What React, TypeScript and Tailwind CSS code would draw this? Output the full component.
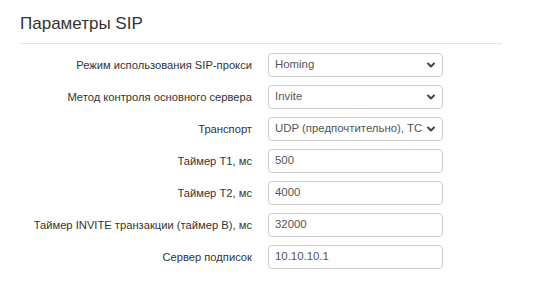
import { ChevronDown } from "lucide-react";

interface Row {
  label: string;
  value: string;
  select?: boolean;
}

const rows: Row[] = [
  { label: "Режим использования SIP-прокси", value: "Homing", select: true },
  { label: "Метод контроля основного сервера", value: "Invite", select: true },
  { label: "Транспорт", value: "UDP (предпочтительно), TC", select: true },
  { label: "Таймер T1, мс", value: "500" },
  { label: "Таймер T2, мс", value: "4000" },
  { label: "Таймер INVITE транзакции (таймер B), мс", value: "32000" },
  { label: "Сервер подписок", value: "10.10.10.1" },
];

function Field({ row }: { row: Row }) {
  return (
    <div className="flex items-center h-[32px]">
      <div className="w-[252px] text-right text-[11.2px] text-[#333]">
        {row.label}
      </div>
      <div className="ml-[16px] w-[175px] h-[24px] rounded-[4px] border border-[#ccc] bg-white flex items-center pl-[6px] pr-[5px] text-[11.4px] text-[#555] overflow-hidden">
        <span className="flex-1 whitespace-nowrap overflow-hidden">{row.value}</span>
        {row.select && (
          <ChevronDown className="size-[12px] text-[#444] shrink-0 ml-[2px]" strokeWidth={4} />
        )}
      </div>
    </div>
  );
}

export default function App() {
  return (
    <div
      className="w-[551px] h-[286px] bg-white"
      style={{ fontFamily: '"Liberation Sans", Arial, sans-serif' }}
    >
      <div className="ml-[19px] w-[483px] pt-[14px]">
        <h2 className="text-[17px] text-[#333] leading-[20px] pl-[1px] pb-[9px] border-b border-[#e5e5e5]">
          Параметры SIP
        </h2>
        <div className="mt-[5px] -ml-[19px]">
          {rows.map((r) => (
            <Field key={r.label} row={r} />
          ))}
        </div>
      </div>
    </div>
  );
}
